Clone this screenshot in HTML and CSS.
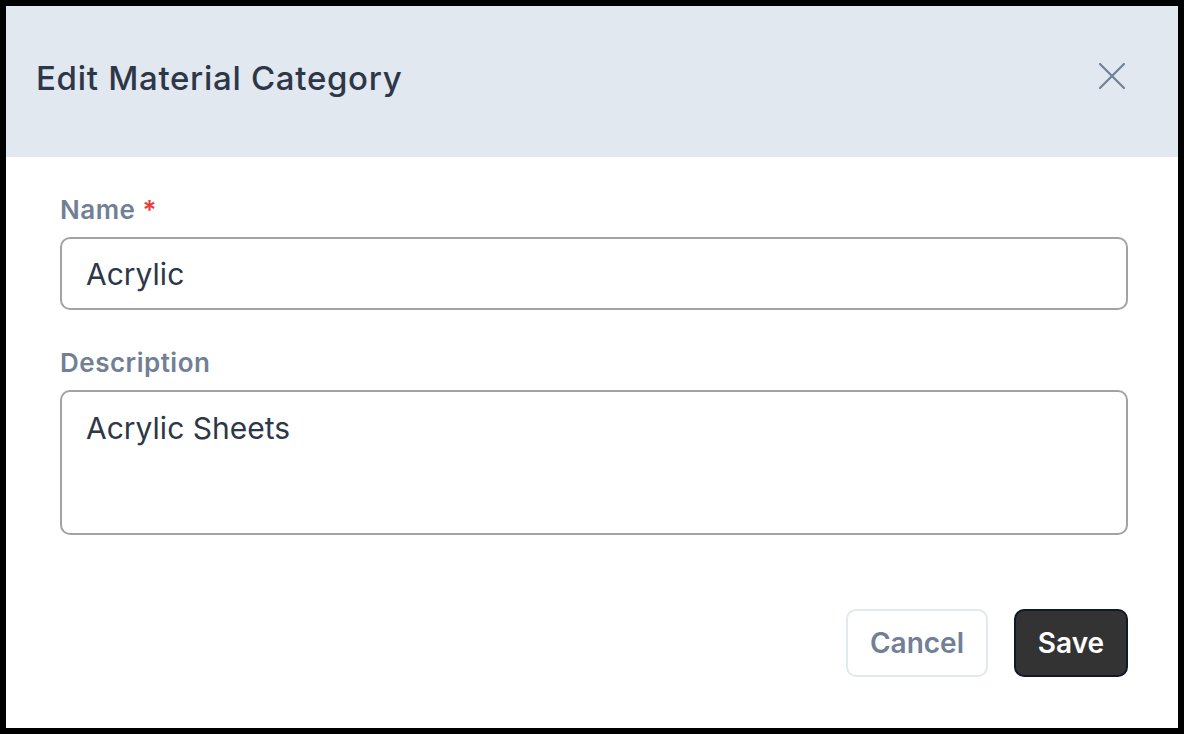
FILE: index.html
```html
<!DOCTYPE html>
<html>
<head>
<meta charset="utf-8">
<link rel="stylesheet" href="styles.css">
</head>
<body>
<div class="modal">
  <div class="modal-header">
    <h2 class="modal-title">Edit Material Category</h2>
    <button class="close-btn" aria-label="Close">
      <svg width="26" height="26" viewBox="0 0 26 26"><path d="M1 1 L25 25 M25 1 L1 25" stroke="#718096" stroke-width="2.2" stroke-linecap="round" fill="none"/></svg>
    </button>
  </div>
  <div class="modal-body">
    <div class="field">
      <label class="label">Name <span class="req">*</span></label>
      <div class="input">Acrylic</div>
    </div>
    <div class="field">
      <label class="label">Description</label>
      <div class="textarea">Acrylic Sheets</div>
    </div>
  </div>
  <div class="modal-footer">
    <button class="btn btn-cancel">Cancel</button>
    <button class="btn btn-save">Save</button>
  </div>
</div>
</body>
</html>
```
FILE: styles.css
```css
html, body {
  margin: 0;
  background: #000;
}
body {
  padding: 6px;
  height: 734px;
  box-sizing: border-box;
  font-family: Inter, "Noto Sans", sans-serif;
}
.modal {
  background: #fff;
  height: 722px;
  display: flex;
  flex-direction: column;
}
.modal-header {
  height: 151px;
  background: #e2e8f0;
  display: flex;
  align-items: center;
  justify-content: space-between;
  padding: 0 53px 0 30px;
  flex-shrink: 0;
}
.modal-title {
  margin: 0 0 8px 0;
  font-size: 33px;
  font-weight: 500;
  color: #2d3748;
  letter-spacing: 0.7px;
}
.close-btn {
  border: none;
  background: none;
  padding: 0;
  width: 26px;
  height: 26px;
  display: flex;
  margin-bottom: 11px;
}
.modal-body {
  padding: 38px 50px 0 54px;
  display: flex;
  flex-direction: column;
  gap: 38px;
}
.field {
  display: flex;
  flex-direction: column;
}
.label {
  font-size: 26px;
  line-height: 30px;
  font-weight: 600;
  color: #718096;
  letter-spacing: 0.5px;
  margin-bottom: 12px;
}
.req {
  color: #e53e3e;
}
.input, .textarea {
  border: 2px solid #a3a3a3;
  border-radius: 10px;
  box-sizing: border-box;
  font-size: 30px;
  color: #2d3748;
  padding: 0 24px;
}
.input {
  height: 73px;
  display: flex;
  align-items: center;
}
.textarea {
  height: 145px;
  padding-top: 14px;
  line-height: 45px;
}
.modal-footer {
  margin-top: auto;
  padding: 0 50px 51px 0;
  display: flex;
  justify-content: flex-end;
  gap: 26px;
}
.btn {
  height: 68px;
  border-radius: 10px;
  font-family: Inter, "Noto Sans", sans-serif;
  font-size: 28px;
  font-weight: 600;
  box-sizing: border-box;
  cursor: pointer;
}
.btn-cancel {
  width: 142px;
  background: #fff;
  border: 2px solid #e2e8f0;
  color: #718096;
}
.btn-save {
  width: 114px;
  background: #333333;
  border: 2px solid #111827;
  color: #fff;
}
```
